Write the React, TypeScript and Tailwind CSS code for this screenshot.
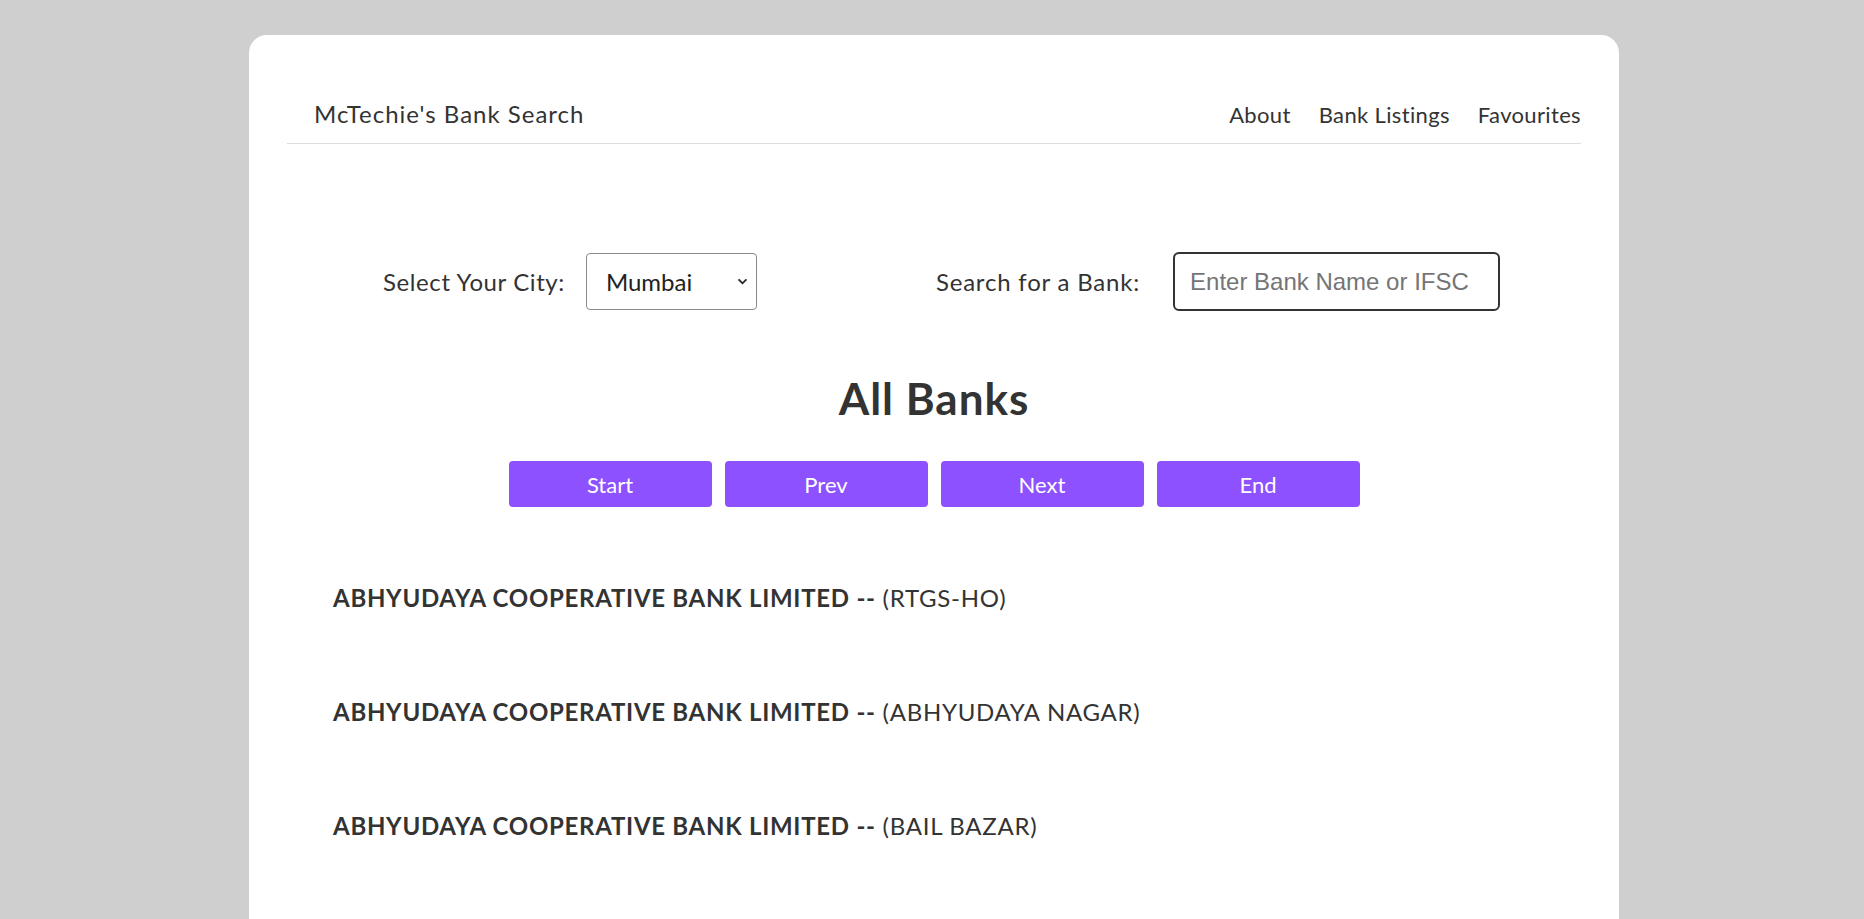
import { useState } from 'react';

const navLinks = ['About', 'Bank Listings', 'Favourites'];
const pager = ['Start', 'Prev', 'Next', 'End'];

const banks = [
  { name: 'ABHYUDAYA COOPERATIVE BANK LIMITED', branch: 'RTGS-HO' },
  { name: 'ABHYUDAYA COOPERATIVE BANK LIMITED', branch: 'ABHYUDAYA NAGAR' },
  { name: 'ABHYUDAYA COOPERATIVE BANK LIMITED', branch: 'BAIL BAZAR' },
];

export default function App() {
  const [city, setCity] = useState('Mumbai');
  const [query, setQuery] = useState('');

  return (
    <div className="h-screen overflow-hidden bg-[#cfcfcf] pt-[35px] font-['Lato',sans-serif] text-[#333]">
      <div className="ml-[249px] min-h-[900px] w-[1370px] rounded-[18px] bg-white px-[38px] pt-[64px]">
        <header className="flex items-baseline justify-between border-b border-[#dedede] pb-[13px] pl-[27px]">
          <span className="text-[24px] leading-[30px] tracking-[1px]">McTechie's Bank Search</span>
          <nav className="flex gap-[28px] text-[22px] leading-[30px] tracking-[0.35px]">
            {navLinks.map((label) => (
              <a key={label} href="#" className="hover:text-violet-500">
                {label}
              </a>
            ))}
          </nav>
        </header>

        <div className="mt-[108px] flex items-center pl-[96px]">
          <label className="text-[24px] tracking-[0.6px]">Select Your City:</label>
          <div className="relative ml-[21px] h-[57px] w-[171px]">
            <select
              value={city}
              onChange={(e) => setCity(e.target.value)}
              className="h-full w-full appearance-none rounded-[4px] border border-[#8a8a8a] bg-white pl-[19px] text-[24px] text-[#222] outline-none"
            >
              <option>Mumbai</option>
              <option>Delhi</option>
              <option>Bangalore</option>
              <option>Chennai</option>
              <option>Kolkata</option>
            </select>
            <svg
              viewBox="0 0 12 8"
              className="pointer-events-none absolute right-[9px] top-[25px] h-[7px] w-[11px]"
              fill="none"
              stroke="#222"
              strokeWidth="2"
            >
              <path d="M1.5 1.5 6 6l4.5-4.5" />
            </svg>
          </div>

          <label className="ml-[179px] text-[24px] tracking-[0.8px]">Search for a Bank:</label>
          <input
            value={query}
            onChange={(e) => setQuery(e.target.value)}
            placeholder="Enter Bank Name or IFSC"
            className="ml-[33px] h-[59px] w-[327px] rounded-[6px] border-2 border-[#333] pl-[15px] font-['Liberation_Sans',Arial,sans-serif] text-[24px] outline-none placeholder:text-[#757575]"
          />
        </div>

        <h1 className="mt-[65px] text-center text-[44px] font-bold leading-[44px] tracking-[1px]">All Banks</h1>

        <div className="mt-[41px] flex justify-center gap-[13px]">
          {pager.map((label) => (
            <button
              key={label}
              className="h-[46px] w-[203px] rounded-[4px] bg-violet-500 text-[22px] text-white hover:bg-violet-600"
            >
              {label}
            </button>
          ))}
        </div>

        <ul className="mt-[76px] flex flex-col gap-[84px] pl-[46px]">
          {banks.map((b) => (
            <li key={b.branch} className="text-[24px] leading-[30px] tracking-[0.72px]">
              <span className="font-bold">{b.name} --</span> ({b.branch})
            </li>
          ))}
        </ul>
      </div>
    </div>
  );
}
